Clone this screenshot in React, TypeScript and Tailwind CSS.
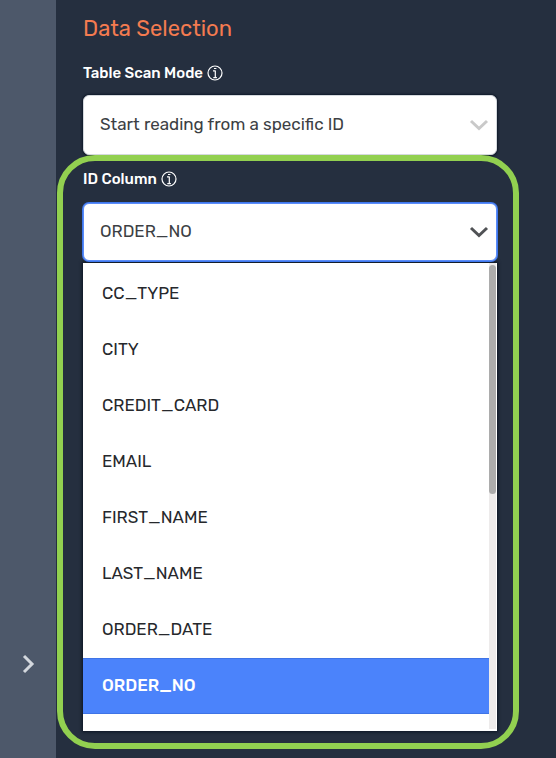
import { useState } from "react";
import clsx from "clsx";

const scanModes = ["Start reading from a specific ID"];

const columns = [
  "CC_TYPE",
  "CITY",
  "CREDIT_CARD",
  "EMAIL",
  "FIRST_NAME",
  "LAST_NAME",
  "ORDER_DATE",
  "ORDER_NO",
];

function InfoIcon() {
  return (
    <svg
      className="h-4 w-4 shrink-0"
      viewBox="0 0 16 16"
      fill="none"
      stroke="currentColor"
      strokeWidth="1.2"
      aria-hidden="true"
    >
      <circle cx="8" cy="8" r="7" />
      <path d="M7 3.5h2.4M8.3 5.5v7.3M6 5.8h2.3M6.3 12.6h3.6" />
    </svg>
  );
}

function Chevron({ className }: { className: string }) {
  return (
    <svg
      className={clsx("pointer-events-none absolute right-2 h-3 w-5", className)}
      viewBox="0 0 20 12"
      fill="none"
      stroke="currentColor"
      strokeWidth="3"
      aria-hidden="true"
    >
      <path d="M2 2l8 7.5L18 2" />
    </svg>
  );
}

type SelectProps = {
  id: string;
  label: string;
  options: string[];
  value: string;
  active?: boolean;
  onChange: (value: string) => void;
};

function SelectField({ id, label, options, value, active, onChange }: SelectProps) {
  return (
    <div>
      <div className="flex h-6 items-center gap-1 text-white">
        <label htmlFor={id} className="text-[15px] font-medium">
          {label}
        </label>
        <InfoIcon />
      </div>
      <div className={clsx("relative flex items-center", active ? "mt-3" : "mt-2.5")}>
        <select
          id={id}
          value={value}
          onChange={(e) => onChange(e.target.value)}
          className={clsx(
            "w-full appearance-none rounded-md border bg-white pr-10 pl-4 text-[17px] text-[#3c3f44] outline-none",
            active
              ? "h-[58px] border-[#5b8cf8] ring-1 ring-[#3f78ee]"
              : "h-[60px] border-[#d5d9de] shadow-[0_0_2px_1px_#101a2a]",
          )}
        >
          {options.map((o) => (
            <option key={o}>{o}</option>
          ))}
        </select>
        <Chevron className={active ? "text-[#505255]" : "text-[#c9c9c9]"} />
      </div>
    </div>
  );
}

export default function App() {
  const [mode, setMode] = useState(scanModes[0]);
  const [column, setColumn] = useState("ORDER_NO");

  return (
    <div className="flex min-h-screen bg-[#252f3f] font-['Rubik','Roboto',sans-serif]">
      {/* Collapsed side rail */}
      <aside className="flex w-14 shrink-0 flex-col justify-end bg-[#4d586a] pb-20">
        <button type="button" aria-label="Expand" className="flex justify-center py-1">
          <svg
            className="h-5 w-4 text-[#d3d7dd]"
            viewBox="0 0 16 20"
            fill="none"
            stroke="currentColor"
            strokeWidth="3"
          >
            <path d="M4 2l8 8-8 8" />
          </svg>
        </button>
      </aside>

      <main className="min-w-0 flex-1 pt-3 pr-[59px] pb-6 pl-[27px]">
        <h2 className="mb-4 text-[22px] leading-[33px] text-[#f47b50]">Data Selection</h2>

        <SelectField
          id="scan-mode"
          label="Table Scan Mode"
          options={scanModes}
          value={mode}
          onChange={setMode}
        />

        <section className="relative mt-3">
          <SelectField
            id="id-column"
            label="ID Column"
            options={columns}
            value={column}
            active
            onChange={setColumn}
          />

          {/* Open option list */}
          <div className="mt-0.5 flex h-[468px] overflow-hidden bg-white shadow-[0_0_3px_1px_#0b1422]">
            <div role="listbox" aria-label="ID Column" className="flex-1 pt-[3px]">
              {columns.map((c) => (
                <button
                  key={c}
                  type="button"
                  role="option"
                  aria-selected={c === column}
                  onClick={() => setColumn(c)}
                  className={clsx(
                    "block h-14 w-full px-[19px] text-left text-[17px]",
                    c === column
                      ? "border-y border-[#3f74e6] bg-[#4b83fb] font-medium text-white"
                      : "text-[#26282c]",
                  )}
                >
                  {c}
                </button>
              ))}
            </div>
            <div className="mr-px mb-0.5 w-[7px] bg-[#edebeb] pt-0.5">
              <div className="h-[229px] rounded-full bg-[#acacac]" />
            </div>
          </div>

          {/* Highlight frame */}
          <div className="pointer-events-none absolute -top-3 -right-[22px] -bottom-[18px] -left-[26px] rounded-[38px] border-6 border-[#92d050]" />
        </section>
      </main>
    </div>
  );
}
